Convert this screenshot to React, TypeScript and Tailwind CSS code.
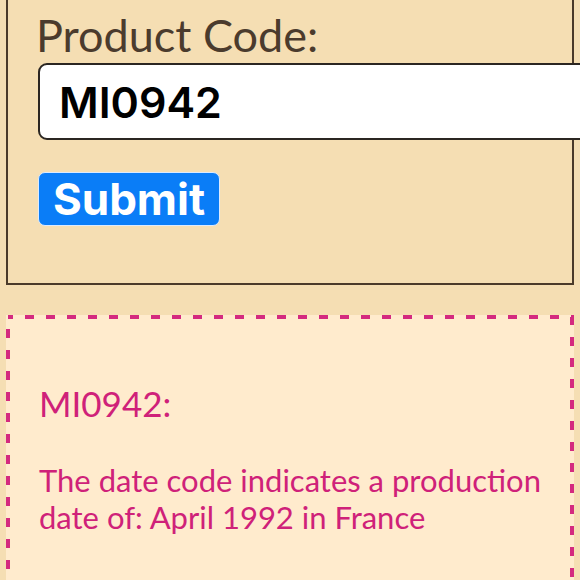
import { useState } from 'react';

const App = () => {
  const [code, setCode] = useState('MI0942');

  return (
    <div className="w-[580px] h-[580px] overflow-hidden bg-[#f5deb3]">
      {/* Lookup form */}
      <div className="ml-[6px] w-[568px] border-x-2 border-b-2 border-[#4b3a2a] pl-[30px] pt-[10px] pb-[57px]">
        <label
          htmlFor="code"
          className="block -ml-0.5 text-[45px] leading-[50px] text-[#4b3b2d] font-['Lato',sans-serif]"
        >
          Product Code:
        </label>
        <input
          id="code"
          value={code}
          onChange={(e) => setCode(e.target.value)}
          className="mt-[3px] block w-[580px] h-[77px] rounded-[9px] border-2 border-[#2b2622] bg-white pl-[19px] text-[43px] font-semibold text-black font-['Inter',sans-serif] outline-none"
        />
        <button className="mt-[32px] flex h-[54px] w-[182px] items-center justify-center rounded-[7px] border border-[#dbeaff] bg-[#0a7df7] text-[44px] font-bold text-white font-['Inter',sans-serif] leading-none">
          Submit
        </button>
      </div>

      {/* Result */}
      <div className="relative mt-[30px] ml-[6px] w-[568px] h-[300px] bg-[#ffebcd] pl-[33px] pr-[20px] pt-[67px] text-[#cf2179] font-['Lato',sans-serif]">
        <svg className="absolute inset-0 pointer-events-none" width="568" height="300">
          <rect
            x="2"
            y="2"
            width="564"
            height="400"
            fill="none"
            stroke="#d42a7f"
            strokeWidth="4"
            strokeDasharray="9 12"
            strokeDashoffset="4"
          />
        </svg>
        <h3 className="text-[35px] leading-[42px]">{code}:</h3>
        <p className="mt-[38px] text-[31px] leading-[37px]">
          The date code indicates a production date of: April 1992 in France
        </p>
      </div>
    </div>
  );
};

export default App;
